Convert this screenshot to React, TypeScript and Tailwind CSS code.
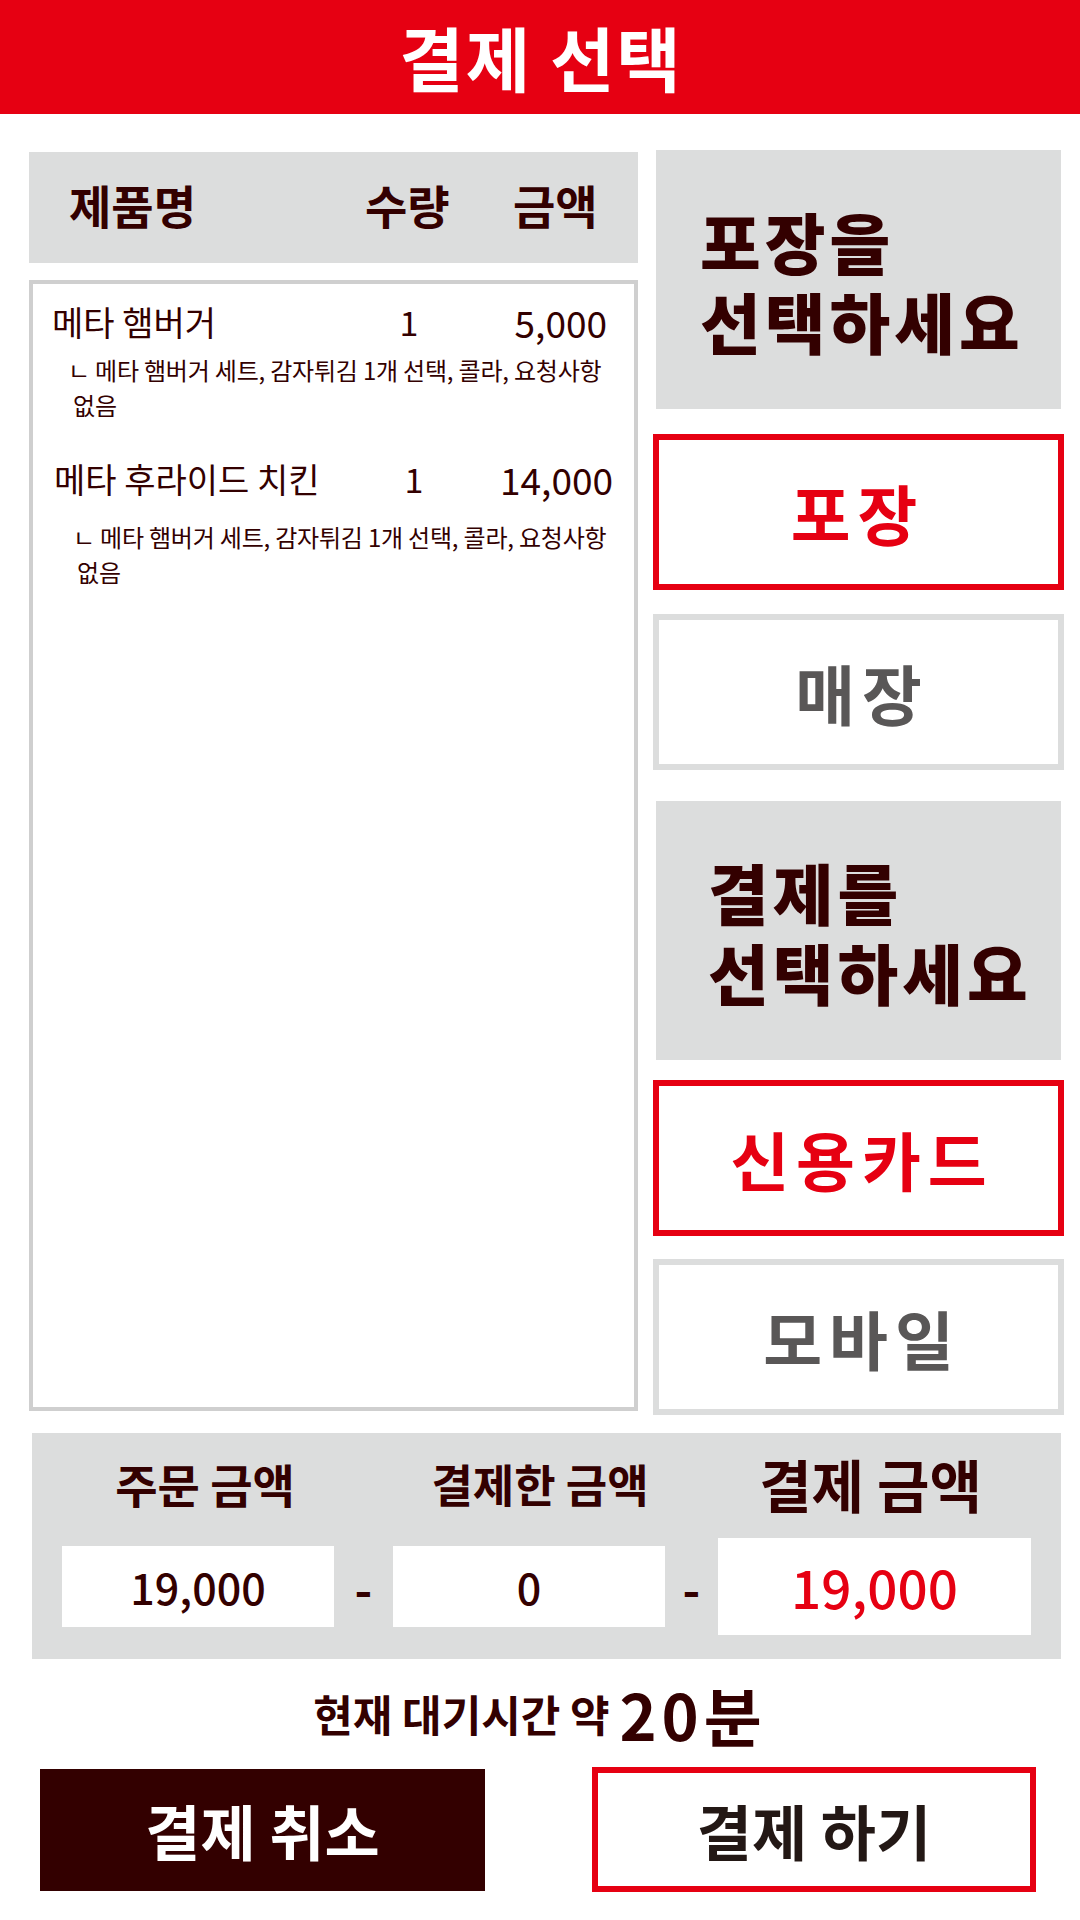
const FONT = "font-['Noto_Sans_CJK_KR','Noto_Sans',sans-serif]"

const items = [
  {
    name: "메타 햄버거",
    qty: "1",
    price: "5,000",
    option: "ㄴ 메타 햄버거 세트, 감자튀김 1개 선택, 콜라, 요청사항",
    rest: "없음"
  },
  {
    name: "메타 후라이드 치킨",
    qty: "1",
    price: "14,000",
    option: "ㄴ 메타 햄버거 세트, 감자튀김 1개 선택, 콜라, 요청사항",
    rest: "없음"
  }
]

function OrderList() {
  return (
    <div className="flex flex-col">
      <div className="h-[111px] mt-[2px] bg-[#dcdddd] flex items-center pl-[40px] pb-[8px] text-[46px] font-bold text-[#330000] leading-none">
        <span className="w-[296px]">제품명</span>
        <span className="w-[148px]">수량</span>
        <span className="w-[110px]">금액</span>
      </div>
      <div className="mt-[17px] h-[1131px] border-4 border-[#cfcfcf] text-[#330000]">
        {/* 첫번째 메뉴 */}
        <div className="pt-[18px] pl-[19px]">
          <div className="flex h-[40px] items-center text-[34px] leading-none">
            <span className="w-[327px]">{items[0].name}</span>
            <span className="w-[60px] text-center">{items[0].qty}</span>
            <span className="w-[168px] text-right text-[37px]">{items[0].price}</span>
          </div>
          <div className="mt-[10px] pl-[16px] text-[24px] leading-[35px] tracking-[-0.2px]">
            <div>{items[0].option}</div>
            <div className="pl-[5px]">{items[0].rest}</div>
          </div>
        </div>
        {/* 두번째 메뉴 */}
        <div className="mt-[37px] pl-[21px]">
          <div className="flex h-[40px] items-center text-[34px] leading-none">
            <span className="w-[330px]">{items[1].name}</span>
            <span className="w-[60px] text-center">{items[1].qty}</span>
            <span className="w-[169px] text-right text-[37px]">{items[1].price}</span>
          </div>
          <div className="mt-[20px] pl-[19px] text-[24px] leading-[35px] tracking-[-0.2px]">
            <div>{items[1].option}</div>
            <div className="pl-[4px]">{items[1].rest}</div>
          </div>
        </div>
      </div>
    </div>
  )
}

function Guide({ first, padLeft }: { first: string; padLeft: string }) {
  return (
    <div
      className={`mx-[3px] h-[259px] bg-[#dcdddd] flex flex-col items-start justify-center ${padLeft} text-[66px] font-black leading-[80px] tracking-[4px] text-[#330000]`}
    >
      <span>{first}</span>
      <span>선택하세요</span>
    </div>
  )
}

function Choice({
  label,
  active,
  size,
  pad = "pl-[7px]"
}: {
  label: string
  active?: boolean
  size: string
  pad?: string
}) {
  return (
    <button
      className={`h-[156px] w-full border-[6px] bg-white flex items-center justify-center ${pad} tracking-[7px] font-bold leading-none ${size} ${
        active
          ? "border-[#e60012] text-[#e60012]"
          : "border-[#dcdddd] text-[#595757]"
      }`}
    >
      {label}
    </button>
  )
}

export default function App() {
  return (
    <div className={`w-[1080px] h-[1920px] bg-white ${FONT}`}>
      <header className="h-[114px] bg-[#e60012] flex items-center justify-center pl-[2px] text-white text-[70px] tracking-[2px] font-bold leading-none">
        결제 선택
      </header>

      <div className="flex pl-[29px] pt-[36px] gap-[15px]">
        <div className="w-[609px]">
          <OrderList />
        </div>
        <div className="w-[411px] flex flex-col">
          <Guide first="포장을" padLeft="pl-[44px]" />
          <div className="mt-[25px]">
            <Choice label="포장" active size="text-[65px]" pad="pr-[2px]" />
          </div>
          <div className="mt-[24px]">
            <Choice label="매장" size="text-[65px]" />
          </div>
          <div className="mt-[31px]">
            <Guide first="결제를" padLeft="pl-[52px]" />
          </div>
          <div className="mt-[20px]">
            <Choice label="신용카드" active size="text-[64px]" />
          </div>
          <div className="mt-[23px]">
            <Choice label="모바일" size="text-[64px]" />
          </div>
        </div>
      </div>

      <div className="mt-[18px] ml-[32px] w-[1029px] h-[226px] bg-[#dcdddd] pl-[30px] text-[#330000]">
        <div className="grid grid-cols-[272px_59px_272px_53px_313px] h-[100px] items-center leading-none font-bold">
          <span className="text-center text-[46px] pl-[14px]">주문 금액</span>
          <span />
          <span className="text-center text-[45px] pl-[22px]">결제한 금액</span>
          <span />
          <span className="text-center text-[57px] pr-[8px]">결제 금액</span>
        </div>
        <div className="grid grid-cols-[272px_59px_272px_53px_313px] h-[107px] items-center leading-none">
          <div className="h-[81px] bg-white flex items-center justify-center text-[43px] font-medium">
            19,000
          </div>
          <span className="text-center text-[48px] font-bold">-</span>
          <div className="h-[81px] bg-white flex items-center justify-center text-[43px] font-medium">
            0
          </div>
          <span className="text-center text-[48px] font-bold">-</span>
          <div className="h-[97px] bg-white flex items-center justify-center text-[53px] font-medium text-[#e60012]">
            19,000
          </div>
        </div>
      </div>

      <div className="h-[108px] flex items-center justify-center text-[#330000] font-bold leading-none">
        <span className="text-[43px]">현재 대기시간 약&nbsp;</span>
        <span className="text-[63px] tracking-[5px]">20분</span>
      </div>

      <div className="flex pl-[40px] gap-[107px] items-center">
        <button className="w-[445px] h-[122px] bg-[#330000] text-white text-[60px] font-bold leading-none">
          결제 취소
        </button>
        <button className="w-[444px] h-[125px] border-[6px] border-[#e60012] bg-white text-[#231815] text-[60px] font-bold leading-none">
          결제 하기
        </button>
      </div>
    </div>
  )
}
